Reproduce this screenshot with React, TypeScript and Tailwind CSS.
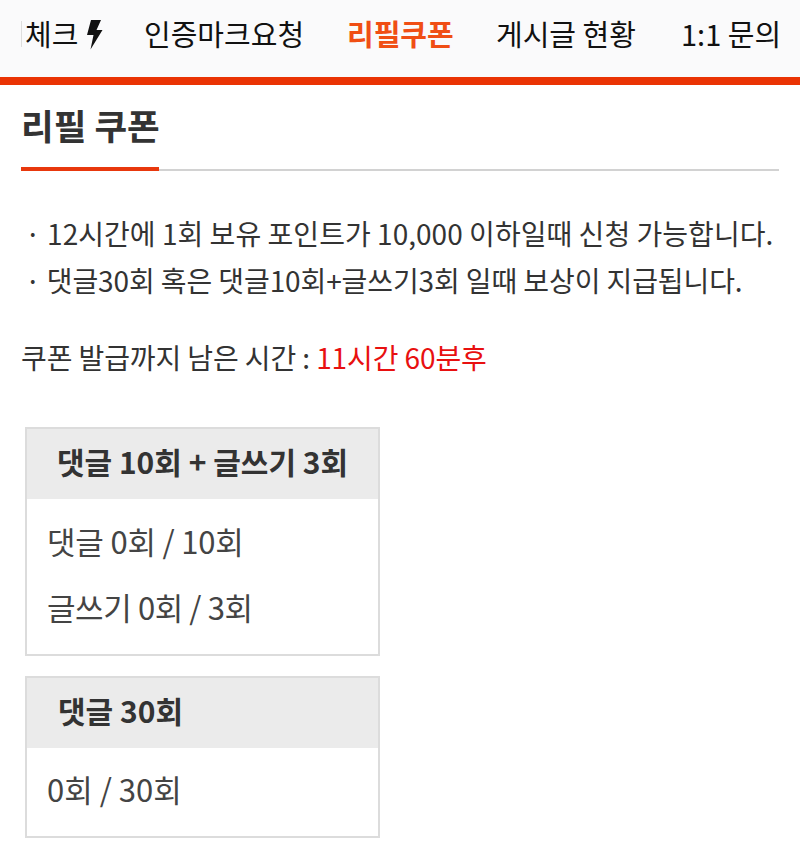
import React from "react";
import { ReactNode } from "react";

const font = { fontFamily: '"Noto Sans CJK KR", "Noto Sans", sans-serif' };

const Bolt = () => (
  <svg width="17" height="31" viewBox="0 0 17 31" className="ml-[8px] mt-[1px]">
    <path d="M5 1h10l-4.500 10H16.500L4.500 30.500 7.500 16H1z" fill="#111" />
  </svg>
);

const Card = ({ title, center, children }: { title: string; center?: boolean; children: ReactNode }) => (
  <div className="w-[355px] border-2 border-[#dcdcdc]">
    <div className={`h-[70px] pb-[6px] bg-[#ebebeb] flex items-center text-[30px] font-bold text-[#333] ${center ? "justify-center" : "pl-[31px]"}`}>
      {title}
    </div>
    <div className="pl-[20px]">{children}</div>
  </div>
);

export default function App() {
  return (
    <div className="w-[800px] h-[849px] bg-white overflow-hidden" style={font}>
      <nav className="h-[85px] bg-[#fafafb] border-b-[8px] border-[#ea3304] flex items-center pb-[10px] pl-[21px] text-[29px] text-[#111]">
        <div className="flex items-center w-[123px] h-[26px] pl-[3px] border-l border-[#ddd]">
          <span>체크</span>
          <Bolt />
        </div>
        <a className="w-[203px]">인증마크요청</a>
        <a className="w-[149px] font-bold text-[#f04e14]">리필쿠폰</a>
        <a className="w-[185px]">게시글 현황</a>
        <a>1:1 문의</a>
      </nav>

      <div className="px-[21px]">
        <div className="relative h-[86px] border-b-2 border-[#d2d2d2]">
          <h2 className="absolute left-0 bottom-[-2px] h-[86px] w-[138px] pt-[15px] text-[35.5px] leading-[50px] font-bold text-[#333] border-b-4 border-[#e8380d] whitespace-nowrap">
            리필 쿠폰
          </h2>
        </div>

        <ul className="mt-[39px] pl-[4px] text-[28px] leading-[47px] text-[#333] whitespace-nowrap">
          <li className="tracking-[0.04px]">· 12시간에 1회 보유 포인트가 10,000 이하일때 신청 가능합니다.</li>
          <li className="tracking-[-0.1px]">· 댓글30회 혹은 댓글10회+글쓰기3회 일때 보상이 지급됩니다.</li>
        </ul>

        <p className="mt-[31px] text-[28px] leading-[45px] text-[#333] tracking-[-0.1px]">
          쿠폰 발급까지 남은 시간 : <span className="text-[#e81010]">11시간 60분후</span>
        </p>

        <div className="mt-[47px] ml-[4px] flex flex-col gap-[20px] text-[31px] text-[#444]">
          <Card title="댓글 10회 + 글쓰기 3회" center>
            <p className="h-[89px] pb-[6px] leading-[83px] tracking-[-0.2px]">댓글 0회 / 10회</p>
            <p className="h-[66px] leading-[38px] tracking-[-0.4px]">글쓰기 0회 / 3회</p>
          </Card>
          <Card title="댓글 30회">
            <p className="h-[88px] leading-[81px]">0회 / 30회</p>
          </Card>
        </div>
      </div>
    </div>
  );
}
